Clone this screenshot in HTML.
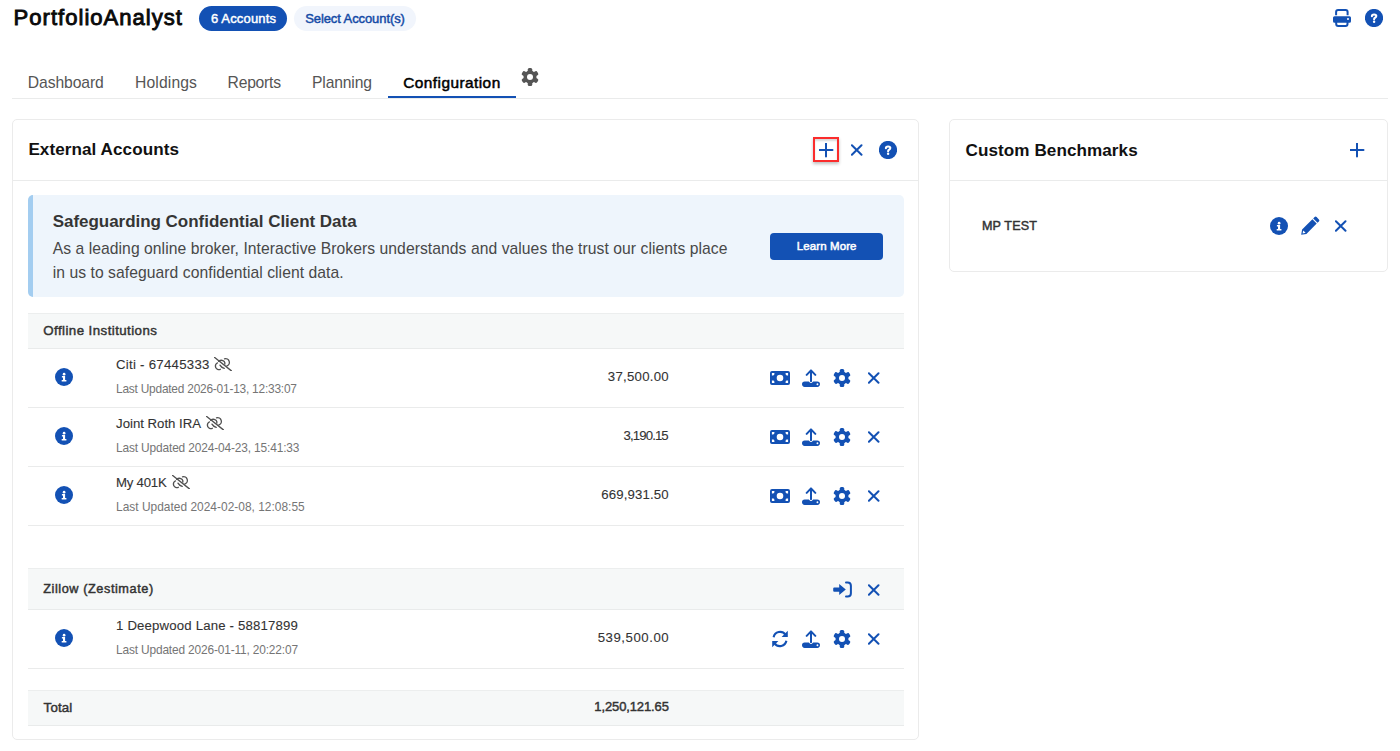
<!DOCTYPE html>
<html><head><meta charset="utf-8">
<style>
*{box-sizing:border-box;margin:0;padding:0}
html,body{width:1400px;height:751px;overflow:hidden;background:#fff;font-family:"Liberation Sans",sans-serif}
.a{position:absolute}
.t{position:absolute;line-height:1;white-space:nowrap}
.ic{position:absolute;overflow:visible}
.line{position:absolute;height:1px;background:#eaebeb}
</style></head><body>
<svg width="0" height="0" style="position:absolute">
<defs>
<symbol id="gear" viewBox="-9 -9 18 18"><g><circle r="6.5"/><rect x="-2.25" y="-8.9" width="4.5" height="17.8" rx="1.5"/><rect x="-2.25" y="-8.9" width="4.5" height="17.8" rx="1.5" transform="rotate(60)"/><rect x="-2.25" y="-8.9" width="4.5" height="17.8" rx="1.5" transform="rotate(120)"/></g><circle r="3.0" fill="#fff" stroke="none"/></symbol>
<symbol id="info" viewBox="0 0 18 18"><circle cx="9" cy="9" r="9" fill="#1351b4"/><circle cx="9.1" cy="6.2" r="1.35" fill="#fff"/><path fill="#fff" d="M6.9 8.1 H10.1 V11.9 H11.4 V13.5 H6.7 V11.9 H8 V9.6 H6.9 Z"/></symbol>
<symbol id="xm" viewBox="0 0 12 12"><path d="M0.9 1.3 L10.5 10.8 M10.5 1.3 L0.9 10.8" stroke="#1351b4" stroke-width="2" stroke-linecap="round" fill="none"/></symbol>
<symbol id="plus" viewBox="0 0 15 15"><path d="M7 0.5 V13.5 M0.5 7 H13.5" stroke="#1351b4" stroke-width="2" stroke-linecap="round" fill="none"/></symbol>
<symbol id="money" viewBox="0 0 20 14"><path fill="#1351b4" fill-rule="evenodd" d="M2 0 H18 Q20 0 20 2 V12 Q20 14 18 14 H2 Q0 14 0 12 V2 Q0 0 2 0 Z M13.3 7 A3.3 3.3 0 1 0 6.7 7 A3.3 3.3 0 1 0 13.3 7 Z M1.9 1.9 H4.4 V3 A1.4 1.4 0 0 1 3 4.4 H1.9 Z M18.1 1.9 V4.4 H17 A1.4 1.4 0 0 1 15.6 3 V1.9 Z M1.9 12.1 V9.6 H3 A1.4 1.4 0 0 1 4.4 11 V12.1 Z M18.1 12.1 H15.6 V11 A1.4 1.4 0 0 1 17 9.6 H18.1 Z"/></symbol>
<symbol id="upload" viewBox="0 0 18 18"><path d="M9 12.2 V2 M4.7 5.9 L9 1.4 L13.3 5.9" stroke="#1351b4" stroke-width="2" stroke-linecap="round" stroke-linejoin="round" fill="none"/><path fill="#1351b4" fill-rule="evenodd" d="M2.7 12.4 H6.8 L8.4 14 H9.6 L11.2 12.4 H15.3 Q18 12.4 18 15.1 Q18 17.9 15.3 17.9 H2.7 Q0 17.9 0 15.1 Q0 12.4 2.7 12.4 Z M16.4 15.2 A0.95 0.95 0 1 0 14.5 15.2 A0.95 0.95 0 1 0 16.4 15.2 Z"/></symbol>
<symbol id="signin" viewBox="0 0 19 17"><path fill="#1351b4" d="M1.2 6.4 H6.2 V3 L12.8 8.5 L6.2 14 V10.7 H1.2 Q0.2 10.7 0.2 9.7 V7.4 Q0.2 6.4 1.2 6.4 Z"/><path d="M13 1.5 H14.6 Q17.9 1.5 17.9 4.8 V12.2 Q17.9 15.5 14.6 15.5 H13" stroke="#1351b4" stroke-width="2" stroke-linecap="round" fill="none"/></symbol>
<symbol id="refresh" viewBox="0 0 18 18"><path d="M2.6 7.2 A6.6 6.6 0 0 1 14.4 4.6 M15.4 10.8 A6.6 6.6 0 0 1 3.6 13.4" stroke="#1351b4" stroke-width="2.1" fill="none"/><path fill="#1351b4" d="M16.8 0.8 V7 H10.6 Z M1.2 17.2 V11 H7.4 Z"/></symbol>
<symbol id="pencil" viewBox="0 0 19 19"><path fill="#1351b4" d="M13.6 1.1 Q14.6 0.1 15.6 1.1 L17.9 3.4 Q18.9 4.4 17.9 5.4 L16.5 6.8 L12.2 2.5 Z M11.4 3.3 L15.7 7.6 L5.4 17.9 L0.2 18.8 L1.1 13.6 Z"/><path fill="#fff" d="M2.2 14.4 L4.6 16.8 L1.6 17.4 Z"/></symbol>
<symbol id="unlink" viewBox="0 0 18 14"><g stroke="#505050" stroke-width="1.35" fill="none" stroke-linecap="round"><path d="M0.4 0.3 L17.4 13.9"/><path d="M3.5 5.9 A3.2 3.2 0 1 0 6.3 12.3"/><path d="M4.7 4.3 Q7.6 2.1 10.3 4.6 Q11.2 5.7 10.8 7.1"/><path d="M6 8.1 Q7.4 10.6 10.2 11.3"/><path d="M10.5 1.9 A3.3 3.3 0 1 1 12.7 9.1"/></g></symbol>
<symbol id="printer" viewBox="0 0 18 18"><path d="M3.1 6.2 V3 Q3.1 1 5.1 1 H12.6 Q14.6 1 14.6 3 V6.2" stroke="#1351b4" stroke-width="2" fill="none"/><path fill="#1351b4" fill-rule="evenodd" d="M1.5 7.3 H16.5 Q18 7.3 18 8.8 V12.2 Q18 13.7 16.5 13.7 H1.5 Q0 13.7 0 12.2 V8.8 Q0 7.3 1.5 7.3 Z M16 10 A1 1 0 1 0 14 10 A1 1 0 1 0 16 10 Z"/><path d="M3.2 12.2 V15 Q3.2 17 5.2 17 H12.5 Q14.5 17 14.5 15 V12.2" stroke="#1351b4" stroke-width="2" fill="none"/></symbol>
<symbol id="help" viewBox="0 0 18 18"><circle cx="9" cy="9" r="9.1" fill="#1351b4"/><path d="M6.9 7.3 Q6.9 5.5 9.1 5.5 Q11.3 5.5 11.3 7.1 Q11.3 8.2 10 8.8 Q9.1 9.2 9.1 10.3" stroke="#fff" stroke-width="2.1" stroke-linecap="round" stroke-linejoin="round" fill="none"/><circle cx="9.1" cy="12.8" r="1.2" fill="#fff"/></symbol>
</defs></svg>

<!-- Top bar -->
<div class="a" style="left:199px;top:6px;width:88px;height:25px;border-radius:13px;background:#1351b4"></div>
<div class="a" style="left:294px;top:6px;width:122px;height:25px;border-radius:13px;background:#f1f5fc"></div>
<svg class="ic" style="left:1333px;top:9px" width="18" height="18"><use href="#printer"/></svg>
<svg class="ic" style="left:1365px;top:9px" width="18" height="18"><use href="#help"/></svg>

<!-- Tabs -->
<svg class="ic" style="left:521px;top:68px;fill:#555" width="18" height="18"><use href="#gear"/></svg>
<div class="line" style="left:12px;top:98px;width:1376px"></div>
<div class="a" style="left:388px;top:96px;width:128px;height:2px;background:#1351b4"></div>

<!-- Panel 1 -->
<div class="a" style="left:12px;top:119px;width:907px;height:621px;border:1px solid #ebebeb;border-radius:5px"></div>
<div class="a" style="left:813px;top:137px;width:26px;height:25px;border:2px solid #fb2c2c;box-shadow:0 2px 3px rgba(0,0,0,.25), inset 0 2px 2px rgba(0,0,0,.15)"></div>
<svg class="ic" style="left:819px;top:143px" width="15" height="15"><use href="#plus"/></svg>
<svg class="ic" style="left:851px;top:144px" width="12" height="12"><use href="#xm"/></svg>
<svg class="ic" style="left:879px;top:141px" width="18" height="18"><use href="#help"/></svg>
<div class="line" style="left:13px;top:180px;width:906px"></div>

<!-- Banner -->
<div class="a" style="left:28px;top:195px;width:876px;height:102px;background:#eef5fc;border-radius:5px;border-left:5px solid #a3cdf0"></div>
<div class="a" style="left:770px;top:233px;width:113px;height:27px;background:#1351b4;border-radius:4px"></div>

<!-- Offline header -->
<div class="a" style="left:28px;top:313px;width:876px;height:36px;background:#f6f8f8;border-top:1px solid #eceeee;border-bottom:1px solid #e9ebeb"></div>

<!-- rows -->
<div class="line" style="left:28px;top:407px;width:876px"></div>
<div class="line" style="left:28px;top:466px;width:876px"></div>
<div class="line" style="left:28px;top:525px;width:876px"></div>

<svg class="ic" style="left:55px;top:368px" width="18" height="18"><use href="#info"/></svg>
<svg class="ic" style="left:214px;top:357px" width="18" height="14"><use href="#unlink"/></svg>
<svg class="ic" style="left:770px;top:371px" width="20" height="14"><use href="#money"/></svg>
<svg class="ic" style="left:802px;top:369px" width="18" height="18"><use href="#upload"/></svg>
<svg class="ic" style="left:833px;top:369px;fill:#1351b4" width="18" height="18"><use href="#gear"/></svg>
<svg class="ic" style="left:868px;top:372px" width="12" height="12"><use href="#xm"/></svg>

<svg class="ic" style="left:55px;top:427px" width="18" height="18"><use href="#info"/></svg>
<svg class="ic" style="left:206px;top:416px" width="18" height="14"><use href="#unlink"/></svg>
<svg class="ic" style="left:770px;top:430px" width="20" height="14"><use href="#money"/></svg>
<svg class="ic" style="left:802px;top:428px" width="18" height="18"><use href="#upload"/></svg>
<svg class="ic" style="left:833px;top:428px;fill:#1351b4" width="18" height="18"><use href="#gear"/></svg>
<svg class="ic" style="left:868px;top:431px" width="12" height="12"><use href="#xm"/></svg>

<svg class="ic" style="left:55px;top:486px" width="18" height="18"><use href="#info"/></svg>
<svg class="ic" style="left:172px;top:475px" width="18" height="14"><use href="#unlink"/></svg>
<svg class="ic" style="left:770px;top:489px" width="20" height="14"><use href="#money"/></svg>
<svg class="ic" style="left:802px;top:487px" width="18" height="18"><use href="#upload"/></svg>
<svg class="ic" style="left:833px;top:487px;fill:#1351b4" width="18" height="18"><use href="#gear"/></svg>
<svg class="ic" style="left:868px;top:490px" width="12" height="12"><use href="#xm"/></svg>

<!-- Zillow header -->
<div class="a" style="left:28px;top:568px;width:876px;height:42px;background:#f6f8f8;border-top:1px solid #eceeee;border-bottom:1px solid #e9ebeb"></div>
<svg class="ic" style="left:833px;top:581px" width="19" height="17"><use href="#signin"/></svg>
<svg class="ic" style="left:868px;top:584px" width="12" height="12"><use href="#xm"/></svg>

<svg class="ic" style="left:55px;top:629px" width="18" height="18"><use href="#info"/></svg>
<svg class="ic" style="left:771px;top:630px" width="18" height="18"><use href="#refresh"/></svg>
<svg class="ic" style="left:802px;top:630px" width="18" height="18"><use href="#upload"/></svg>
<svg class="ic" style="left:833px;top:630px;fill:#1351b4" width="18" height="18"><use href="#gear"/></svg>
<svg class="ic" style="left:868px;top:633px" width="12" height="12"><use href="#xm"/></svg>
<div class="line" style="left:28px;top:668px;width:876px"></div>

<!-- Total -->
<div class="a" style="left:28px;top:690px;width:876px;height:36px;background:#f6f8f8;border-top:1px solid #eceeee;border-bottom:1px solid #e9ebeb"></div>

<!-- Panel 2 -->
<div class="a" style="left:949px;top:119px;width:439px;height:153px;border:1px solid #ebebeb;border-radius:5px"></div>
<svg class="ic" style="left:1350px;top:143px" width="15" height="15"><use href="#plus"/></svg>
<div class="line" style="left:950px;top:180px;width:437px"></div>
<svg class="ic" style="left:1270px;top:217px" width="18" height="18"><use href="#info"/></svg>
<svg class="ic" style="left:1301px;top:216px" width="19" height="19"><use href="#pencil"/></svg>
<svg class="ic" style="left:1335px;top:220px" width="12" height="12"><use href="#xm"/></svg>
<div class="t" style="left:13.55px;top:6.80px;font-size:22.09px;color:#0a0a0a;letter-spacing:1.003px;-webkit-text-stroke:0.9px #0a0a0a;">PortfolioAnalyst</div>
<div class="t" style="left:210.92px;top:12.49px;font-size:13.01px;color:#fff;letter-spacing:0.161px;-webkit-text-stroke:0.45px #fff;">6 Accounts</div>
<div class="t" style="left:305.23px;top:12.49px;font-size:13.01px;color:#134aa6;letter-spacing:-0.094px;-webkit-text-stroke:0.45px #134aa6;">Select Account(s)</div>
<div class="t" style="left:27.80px;top:75.21px;font-size:15.70px;color:#555;letter-spacing:-0.087px;">Dashboard</div>
<div class="t" style="left:135.00px;top:75.21px;font-size:15.70px;color:#555;letter-spacing:0.129px;">Holdings</div>
<div class="t" style="left:227.60px;top:75.21px;font-size:15.70px;color:#555;letter-spacing:-0.258px;">Reports</div>
<div class="t" style="left:312.00px;top:75.21px;font-size:15.70px;color:#555;letter-spacing:-0.157px;">Planning</div>
<div class="t" style="left:403.25px;top:75.46px;font-size:15.41px;color:#000;letter-spacing:0.442px;-webkit-text-stroke:0.5px #000;">Configuration</div>
<div class="t" style="left:28.40px;top:141.02px;font-size:17.10px;color:#111;letter-spacing:0.069px;font-weight:bold;">External Accounts</div>
<div class="t" style="left:965.60px;top:142.02px;font-size:17.10px;color:#111;letter-spacing:0.066px;font-weight:bold;">Custom Benchmarks</div>
<div class="t" style="left:52.70px;top:213.11px;font-size:17.00px;color:#353535;letter-spacing:-0.032px;font-weight:bold;">Safeguarding Confidential Client Data</div>
<div class="t" style="left:52.70px;top:241.21px;font-size:15.70px;color:#484848;letter-spacing:0.052px;">As a leading online broker, Interactive Brokers understands and values the trust our clients place</div>
<div class="t" style="left:52.70px;top:265.21px;font-size:15.70px;color:#484848;letter-spacing:0.053px;">in us to safeguard confidential client data.</div>
<div class="t" style="left:796.85px;top:240.78px;font-size:11.48px;color:#fff;letter-spacing:0.111px;-webkit-text-stroke:0.5px #fff;">Learn More</div>
<div class="t" style="left:43.33px;top:324.24px;font-size:13.30px;color:#333;letter-spacing:0.426px;-webkit-text-stroke:0.45px #333;">Offline Institutions</div>
<div class="t" style="left:116.05px;top:358.30px;font-size:13.23px;color:#333;letter-spacing:0.261px;-webkit-text-stroke:0.1px #333;">Citi - 67445333</div>
<div class="t" style="left:116.00px;top:384.41px;font-size:11.92px;color:#757575;letter-spacing:-0.222px;">Last Updated 2026-01-13, 12:33:07</div>
<div class="t" style="left:607.85px;top:370.30px;font-size:13.23px;color:#333;letter-spacing:0.256px;-webkit-text-stroke:0.1px #333;">37,500.00</div>
<div class="t" style="left:116.05px;top:417.30px;font-size:13.23px;color:#333;letter-spacing:-0.012px;-webkit-text-stroke:0.1px #333;">Joint Roth IRA</div>
<div class="t" style="left:116.00px;top:443.41px;font-size:11.92px;color:#757575;letter-spacing:-0.144px;">Last Updated 2024-04-23, 15:41:33</div>
<div class="t" style="left:623.55px;top:429.30px;font-size:13.23px;color:#333;letter-spacing:-0.900px;-webkit-text-stroke:0.1px #333;">3,190.15</div>
<div class="t" style="left:116.05px;top:476.30px;font-size:13.23px;color:#333;letter-spacing:-0.250px;-webkit-text-stroke:0.1px #333;">My 401K</div>
<div class="t" style="left:116.00px;top:502.41px;font-size:11.92px;color:#757575;letter-spacing:0.022px;">Last Updated 2024-02-08, 12:08:55</div>
<div class="t" style="left:601.25px;top:488.30px;font-size:13.23px;color:#333;letter-spacing:0.144px;-webkit-text-stroke:0.1px #333;">669,931.50</div>
<div class="t" style="left:116.05px;top:619.30px;font-size:13.23px;color:#333;letter-spacing:0.156px;-webkit-text-stroke:0.1px #333;">1 Deepwood Lane - 58817899</div>
<div class="t" style="left:116.00px;top:645.41px;font-size:11.92px;color:#757575;letter-spacing:-0.159px;">Last Updated 2026-01-11, 20:22:07</div>
<div class="t" style="left:597.65px;top:631.30px;font-size:13.23px;color:#333;letter-spacing:0.544px;-webkit-text-stroke:0.1px #333;">539,500.00</div>
<div class="t" style="left:43.23px;top:582.73px;font-size:12.72px;color:#333;letter-spacing:0.562px;-webkit-text-stroke:0.45px #333;">Zillow (Zestimate)</div>
<div class="t" style="left:43.62px;top:701.24px;font-size:13.30px;color:#333;letter-spacing:0.138px;-webkit-text-stroke:0.45px #333;">Total</div>
<div class="t" style="left:594.33px;top:700.49px;font-size:13.01px;color:#333;letter-spacing:-0.123px;-webkit-text-stroke:0.45px #333;">1,250,121.65</div>
<div class="t" style="left:981.93px;top:219.86px;font-size:12.57px;color:#333;letter-spacing:0.167px;-webkit-text-stroke:0.45px #333;">MP TEST</div>
</body></html>
